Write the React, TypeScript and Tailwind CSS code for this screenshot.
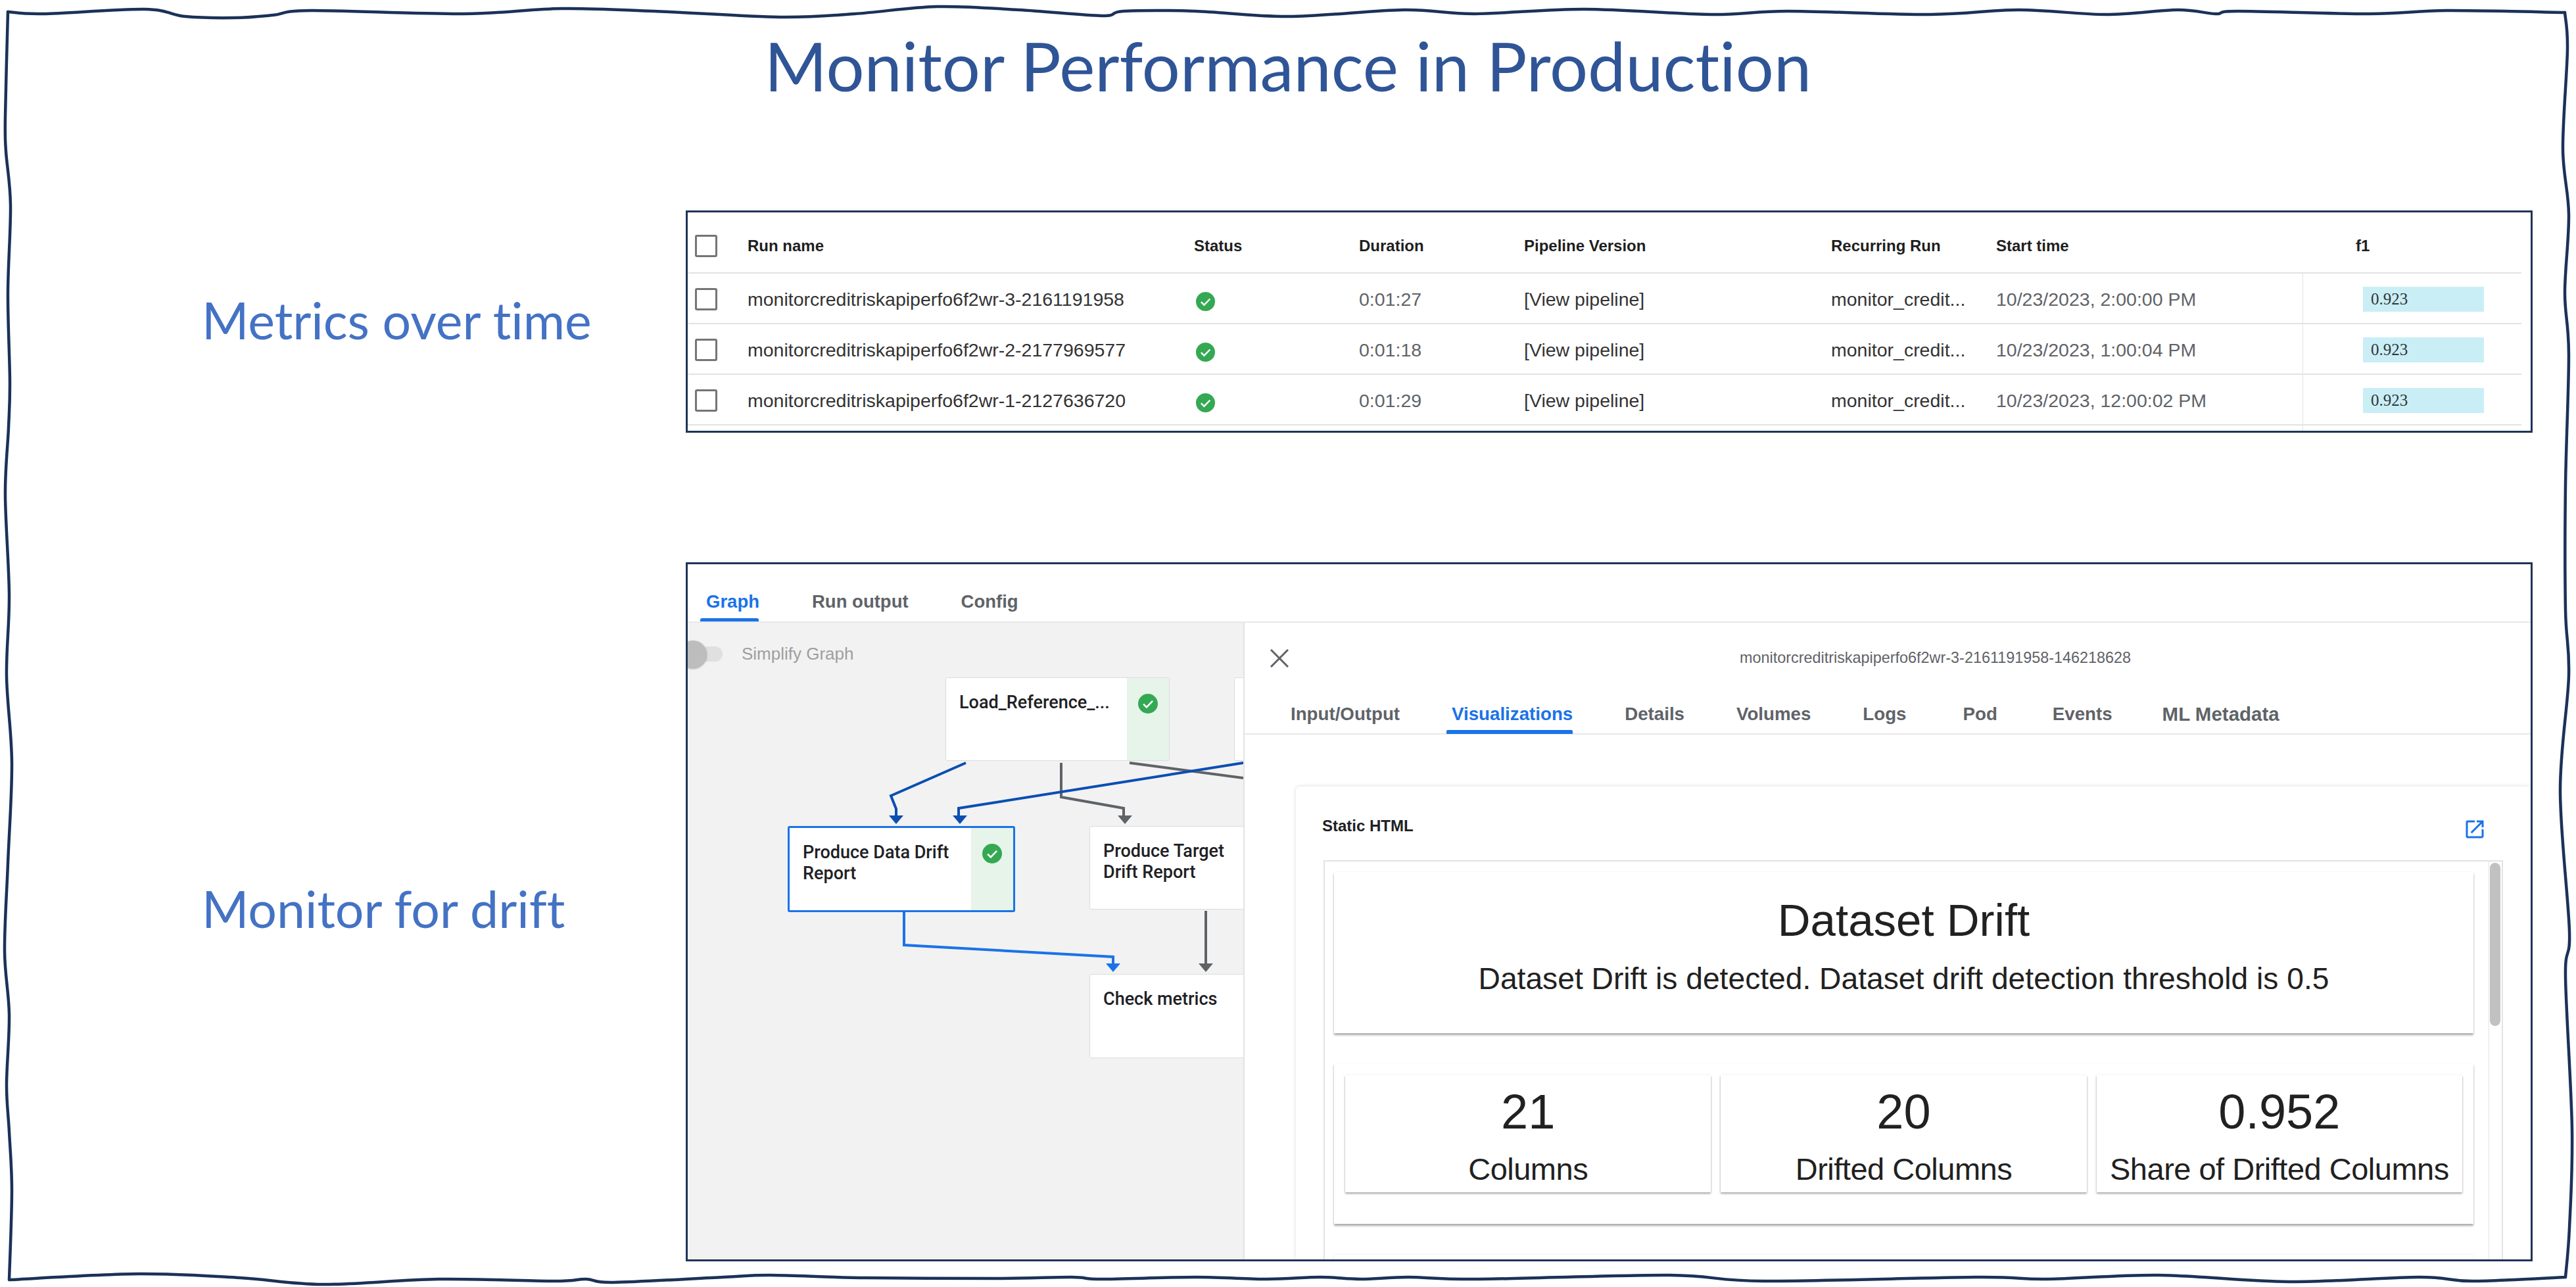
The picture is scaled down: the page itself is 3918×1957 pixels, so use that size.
import { MdOpenInNew } from "react-icons/md";

type Pt = [number, number];

const WAVE_SIDES: Pt[][] = [
  [
    [12, 18], [66, 21], [220, 14], [282, 25], [357, 27], [415, 23], [473, 16], [705, 21], [854, 13], [995, 17], [1186, 26],
    [1300, 21], [1425, 10], [1550, 15], [1676, 24], [1709, 17], [1818, 17], [1960, 25], [2135, 15], [2243, 21], [2410, 14],
    [2602, 22], [2719, 17], [2936, 22], [3070, 15], [3203, 22], [3312, 15], [3370, 21], [3404, 17], [3604, 21], [3721, 16], [3901, 19],
  ],
  [
    [3901, 19], [3905, 75], [3898, 226], [3907, 326], [3901, 445], [3907, 539], [3902, 739], [3902, 927], [3907, 1028], [3894, 1203],
    [3908, 1416], [3902, 1485], [3912, 1717], [3908, 1867], [3902, 1942],
  ],
  [
    [3902, 1942], [3760, 1948], [3679, 1942], [3481, 1949], [3284, 1939], [3113, 1945], [3005, 1942], [2682, 1948], [2538, 1939], [2250, 1945],
    [2142, 1942], [2070, 1945], [2008, 1942], [1927, 1945], [1819, 1942], [1675, 1945], [1630, 1942], [1513, 1944], [1316, 1943],
    [1172, 1939], [1100, 1942], [933, 1950], [891, 1945], [842, 1948], [667, 1945], [491, 1953], [365, 1943], [210, 1937], [14, 1946],
  ],
  [
    [14, 1946], [18, 1811], [14, 1721], [10, 1650], [14, 1543], [7, 1446], [12, 1313], [18, 1160], [10, 1028], [14, 905], [8, 752], [13, 650],
    [15, 580], [12, 446], [16, 312], [9, 230], [8, 178], [12, 18],
  ],
];

// smooth curve through the points, sharp at both ends
function sidePath(points: Pt[]) {
  let d = `M${points[0][0]} ${points[0][1]}`;
  for (let i = 0; i < points.length - 1; i++) {
    const p0 = points[Math.max(i - 1, 0)];
    const p1 = points[i];
    const p2 = points[i + 1];
    const p3 = points[Math.min(i + 2, points.length - 1)];
    const c1x = p1[0] + (p2[0] - p0[0]) / 6;
    const c1y = p1[1] + (p2[1] - p0[1]) / 6;
    const c2x = p2[0] - (p3[0] - p1[0]) / 6;
    const c2y = p2[1] - (p3[1] - p1[1]) / 6;
    d += ` C${c1x} ${c1y} ${c2x} ${c2y} ${p2[0]} ${p2[1]}`;
  }
  return d;
}

const RUNS = [
  { name: "monitorcreditriskapiperfo6f2wr-3-2161191958", duration: "0:01:27", start: "10/23/2023, 2:00:00 PM" },
  { name: "monitorcreditriskapiperfo6f2wr-2-2177969577", duration: "0:01:18", start: "10/23/2023, 1:00:04 PM" },
  { name: "monitorcreditriskapiperfo6f2wr-1-2127636720", duration: "0:01:29", start: "10/23/2023, 12:00:02 PM" },
];

const COLS = "grid grid-cols-[91px_679px_251px_251px_467px_251px_466px_333px]";

function Check({ size }: { size: number }) {
  return (
    <svg width={size} height={size} viewBox="0 0 24 24" className="shrink-0">
      <circle cx="12" cy="12" r="12" fill="#34a853" />
      <path d="M6.5 12.5l3.8 3.8 7.4-7.6" fill="none" stroke="#fff" strokeWidth="2" />
    </svg>
  );
}

function Checkbox() {
  return <span className="ml-[11px] block h-[34px] w-[34px] rounded-[3px] border-[3px] border-[#757575]" />;
}

function RunsTable() {
  return (
    <div className="h-[338px] overflow-hidden border-[3px] border-[#1f3458] bg-white">
      <div className={`${COLS} h-[93px] w-[2789px] items-center border-b-2 border-[#e3e3e3] pt-[10px] text-[24px] font-bold text-[#1f1f1f]`}>
        <Checkbox />
        <span>Run name</span>
        <span>Status</span>
        <span>Duration</span>
        <span>Pipeline Version</span>
        <span>Recurring Run</span>
        <span>Start time</span>
        <span className="pl-[81px]">f1</span>
      </div>
      {RUNS.map((run) => (
        <div key={run.name} className={`${COLS} h-[77px] w-[2789px] items-center border-b-2 border-[#e3e3e3] pt-[3px] text-[28.5px] text-[#333]`}>
          <Checkbox />
          <span>{run.name}</span>
          <span className="mt-[6px] pl-[3px]">
            <Check size={29} />
          </span>
          <span className="text-[#5f6368]">{run.duration}</span>
          <span>[View pipeline]</span>
          <span>monitor_credit...</span>
          <span className="text-[#5f6368]">{run.start}</span>
          <span className="-mt-[3px] flex items-center self-stretch border-l border-[#e3e3e3] pl-[91px] pt-[3px]">
            <span className="flex h-[38px] w-[184px] items-center bg-[#c9eef6] pl-[12px] font-['Liberation_Serif',serif] text-[25px] text-[#333]">
              0.923
            </span>
          </span>
        </div>
      ))}
      <div className={`${COLS} h-full w-[2789px]`}>
        <span className="col-start-8 border-l border-[#e3e3e3]" />
      </div>
    </div>
  );
}

function GraphNode({
  label,
  done,
  hideStrip,
  className,
}: {
  label: string;
  done?: boolean;
  hideStrip?: boolean;
  className: string;
}) {
  return (
    <div className={`absolute flex overflow-hidden rounded-[3px] border bg-white ${className}`}>
      <div className="min-w-0 flex-1 pl-[20px] pr-[25px] pt-[21px] font-['Roboto',sans-serif] text-[27px] leading-[32px] font-medium text-[#202124]">
        {label}
      </div>
      {done && (
        <div className={`flex w-[64px] shrink-0 justify-center pt-[24px] ${hideStrip ? "" : "bg-[#e6f4ea]"}`}>
          {!hideStrip && <Check size={30} />}
        </div>
      )}
    </div>
  );
}

function GraphCanvas() {
  return (
    <div className="relative w-[845px] shrink-0 overflow-hidden bg-[#f2f2f2]">
      <span className="absolute left-0 top-[36px] h-[23px] w-[53px] rounded-full bg-[#e0e0e0]" />
      <span className="absolute -left-[13px] top-[27px] h-[42px] w-[42px] rounded-full bg-[#bdbdbd] shadow-[0_1px_3px_rgba(0,0,0,0.3)]" />
      <span className="absolute left-[82px] top-[33px] text-[26px] leading-[28px] text-[#9e9e9e]">Simplify Graph</span>

      <svg viewBox="1046 947 845 968" className="absolute left-0 top-0 h-[968px] w-[845px]" fill="none">
        <g stroke="#5f6368" strokeWidth="4">
          <path d="M1614 1160V1212L1709 1229V1242" />
          <path d="M1718 1160L1891 1183" />
          <path d="M1834 1385V1466" />
        </g>
        <g fill="#5f6368">
          <path d="M1700 1240H1722L1711 1253Z" />
          <path d="M1823 1465H1845L1834 1478Z" />
        </g>
        <g stroke="#0b4eb3" strokeWidth="4">
          <path d="M1469 1160L1355 1210L1363 1230V1242" />
          <path d="M1891 1160L1458 1229V1242" />
        </g>
        <g fill="#0b4eb3">
          <path d="M1352 1240H1374L1363 1253Z" />
          <path d="M1449 1240H1471L1460 1253Z" />
        </g>
        <path d="M1375 1387V1437L1693 1455V1466" stroke="#1a73e8" strokeWidth="4" />
        <path d="M1682 1465H1704L1693 1478Z" fill="#1a73e8" />
      </svg>

      <GraphNode label="Load_Reference_..." done className="left-[392px] top-[83px] h-[127px] w-[341px] border-[#dcdcdc]" />
      <GraphNode label="" className="left-[831px] top-[83px] h-[127px] w-[200px] border-[#dcdcdc]" />
      <GraphNode
        label="Produce Data Drift Report"
        done
        className="left-[152px] top-[309px] h-[131px] w-[346px] border-[3px] border-[#1a73e8]"
      />
      <GraphNode
        label="Produce Target Drift Report"
        done
        hideStrip
        className="left-[611px] top-[309px] h-[127px] w-[346px] border-[#dcdcdc]"
      />
      <GraphNode label="Check metrics" className="left-[611px] top-[534px] h-[128px] w-[346px] border-[#dcdcdc]" />
    </div>
  );
}

function StatTile({ value, label }: { value: string; label: string }) {
  return (
    <div className="flex h-[178px] flex-col items-center bg-white pt-[16px] shadow-[0_2px_3px_rgba(0,0,0,0.35),0_0_3px_rgba(0,0,0,0.06)]">
      <span className="text-[74px] leading-[80px] text-[#212121]">{value}</span>
      <span className="mt-[22px] text-[47px] leading-[50px] tracking-[-0.5px] text-[#212121]">{label}</span>
    </div>
  );
}

function DriftFrame() {
  return (
    <div className="ml-[2px] flex h-[700px] w-[1794px] border-2 border-[#e3e3e3]">
      <div className="w-[1772px] pl-[14px] pr-[23px] pt-[16px]">
        <div className="flex h-[245px] flex-col items-center bg-white pt-[36px] shadow-[0_3px_3px_rgba(0,0,0,0.32),0_0_3px_rgba(0,0,0,0.06)]">
          <span className="text-[69px] leading-[76px] text-[#212121]">Dataset Drift</span>
          <span className="mt-[25px] text-[46.2px] leading-[50px] text-[#212121]">
            Dataset Drift is detected. Dataset drift detection threshold is 0.5
          </span>
        </div>
        <div className="mt-[46px] grid h-[244px] grid-cols-3 gap-[15px] bg-white px-[17px] pt-[18px] shadow-[0_3px_3px_rgba(0,0,0,0.32),0_0_3px_rgba(0,0,0,0.06)]">
          <StatTile value="21" label="Columns" />
          <StatTile value="20" label="Drifted Columns" />
          <StatTile value="0.952" label="Share of Drifted Columns" />
        </div>
        <div className="mt-[47px] h-[100px] bg-white shadow-[0_0_3px_rgba(0,0,0,0.12)]" />
      </div>
      <div className="w-[20px] border-l border-[#e3e3e3] pl-[1px] pt-[2px]">
        <div className="h-[248px] w-[16px] rounded-full bg-[#c1c1c1]" />
      </div>
    </div>
  );
}

const DETAIL_TABS = [
  { label: "Input/Output", className: "" },
  { label: "Details", className: "" },
  { label: "Volumes", className: "" },
  { label: "Logs", className: "" },
  { label: "Pod", className: "ml-[7px]" },
  { label: "Events", className: "ml-[5px]" },
  { label: "ML Metadata", className: "-ml-[3px] text-[29.5px]" },
];

function DetailPanel() {
  return (
    <div className="min-w-0 flex-1 overflow-hidden border-l-2 border-[#e3e3e3] bg-white">
      <div className="flex h-[108px] items-center pl-[39px]">
        <svg width="28" height="28" viewBox="0 0 28 28" stroke="#5f6368" strokeWidth="3" className="shrink-0">
          <path d="M1 1L27 27M27 1L1 27" />
        </svg>
        <span className="ml-[686px] text-[23.4px] text-[#5f6368]">monitorcreditriskapiperfo6f2wr-3-2161191958-146218628</span>
      </div>
      <div className="flex h-[62px] gap-[79px] border-b-2 border-[#e8e8e8] pl-[70px] pt-[16px] text-[27.7px] font-bold text-[#5f6368]">
        <span className="h-[30px] leading-[30px]">{DETAIL_TABS[0].label}</span>
        <span className="relative h-[30px] leading-[30px] text-[#1a73e8]">
          Visualizations
          <span className="absolute -left-[8px] right-0 top-[39px] h-[6px] rounded-t-[2px] bg-[#1a73e8]" />
        </span>
        {DETAIL_TABS.slice(1).map((tab) => (
          <span key={tab.label} className={`h-[30px] leading-[30px] ${tab.className}`}>
            {tab.label}
          </span>
        ))}
      </div>
      <div className="ml-[78px] mt-[79px] rounded-t-[6px] bg-white pl-[40px] shadow-[0_0_6px_rgba(0,0,0,0.14)]">
        <div className="flex h-[112px] items-start justify-between pr-[67px] pt-[46px]">
          <span className="text-[24px] leading-[28px] font-bold text-[#202124]">Static HTML</span>
          <MdOpenInNew size={36} color="#1a73e8" className="mt-[1px]" />
        </div>
        <DriftFrame />
      </div>
    </div>
  );
}

function RunDetail() {
  return (
    <div className="flex h-[1063px] flex-col overflow-hidden border-[3px] border-[#1f3458] bg-white">
      <div className="flex h-[89px] shrink-0 gap-[80px] border-b-2 border-[#e8e8e8] pl-[28px] pt-[39px] text-[27.5px] font-bold text-[#5f6368]">
        <span className="relative h-[36px] leading-[36px] text-[#1a73e8]">
          Graph
          <span className="absolute -left-[9px] top-[43px] h-[5px] w-[89px] rounded-t-[3px] bg-[#1a73e8]" />
        </span>
        <span className="h-[36px] leading-[36px]">Run output</span>
        <span className="h-[36px] leading-[36px]">Config</span>
      </div>
      <div className="flex min-h-0 flex-1">
        <GraphCanvas />
        <DetailPanel />
      </div>
    </div>
  );
}

export default function App() {
  return (
    <div className="relative flex h-[1957px] w-[3918px] flex-col overflow-hidden bg-white font-['Liberation_Sans',Arial,sans-serif]">
      <svg viewBox="0 0 3918 1957" className="pointer-events-none absolute inset-0 h-[1957px] w-[3918px]" fill="none">
        {WAVE_SIDES.map((side, i) => (
          <path key={i} d={sidePath(side)} stroke="#1b3158" strokeWidth="4.5" strokeLinecap="round" />
        ))}
      </svg>
      <h1 className="flex h-[200px] shrink-0 items-center justify-center font-['Lato',sans-serif] text-[102.5px] font-normal text-[#2f5597] [font-variant-ligatures:none]">
        Monitor Performance in Production
      </h1>
      <div className="mt-[120px] grid grid-cols-[1043px_2809px] items-center">
        <h2 className="pb-[5px] pl-[307px] font-['Lato',sans-serif] text-[77px] font-normal text-[#4472c4] [font-variant-ligatures:none]">
          Metrics over time
        </h2>
        <RunsTable />
      </div>
      <div className="mt-[197px] grid grid-cols-[1043px_2809px] items-center">
        <h2 className="pb-[10px] pl-[307px] font-['Lato',sans-serif] text-[77px] font-normal text-[#4472c4] [font-variant-ligatures:none]">
          Monitor for drift
        </h2>
        <RunDetail />
      </div>
    </div>
  );
}
